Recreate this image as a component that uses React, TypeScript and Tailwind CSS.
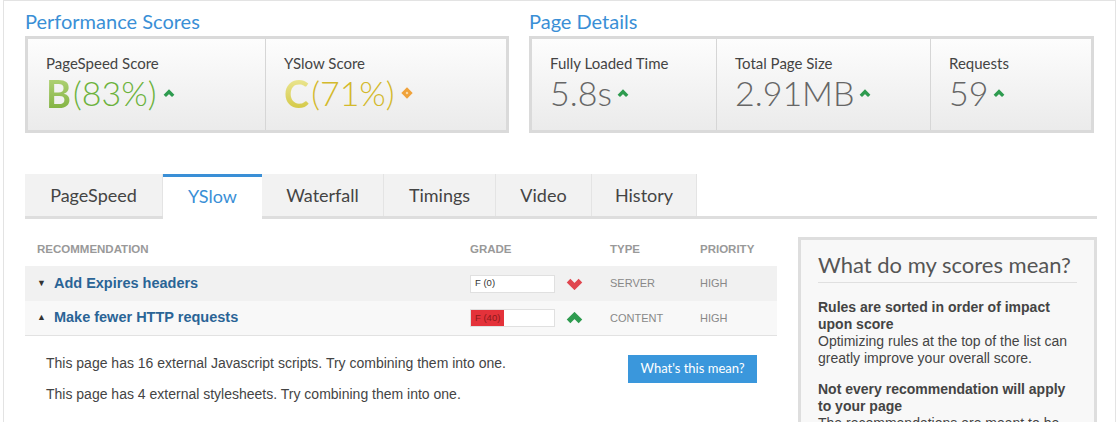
import React from "react";

const head = { fontFamily: "Lato, 'Open Sans', sans-serif" };
const body = { fontFamily: "'Liberation Sans', Arial, sans-serif" };

function Caret({ up = true, className = "", w = 2.4 }: { up?: boolean; className?: string; w?: number }) {
  return (
    <svg viewBox="0 0 10 7" className={className}>
      <polyline
        points={up ? "1.5,5.5 5,2 8.5,5.5" : "1.5,1.5 5,5 8.5,1.5"}
        fill="none"
        stroke="currentColor"
        strokeWidth={w}
      />
    </svg>
  );
}

function Stat({ label, children, className = "" }: { label: string; children: React.ReactNode; className?: string }) {
  return (
    <div className={`bg-gradient-to-b from-[#fdfdfd] to-[#ebebeb] pl-[18px] pt-[14px] ${className}`}>
      <div className="text-[15px] text-[#444] leading-5" style={head}>{label}</div>
      <div className="flex items-center h-[38px] mt-[1px]" style={head}>{children}</div>
    </div>
  );
}

export default function App() {
  const tabs = ["PageSpeed", "YSlow", "Waterfall", "Timings", "Video", "History"];
  const widths = ["w-[138px]", "w-[99px]", "w-[122px]", "w-[112px]", "w-[96px]", "w-[105px]"];

  return (
    <div className="w-[1120px] h-[422px] overflow-hidden bg-white">
      <div className="ml-[3px] w-[1113px] h-[422px] border-l border-r border-t border-[#e3e3e3] pl-[21px] pt-[7px]">
        {/* Top summaries */}
        <div className="flex gap-[20px]">
          <div className="w-[484px]">
            <h2 className="text-[20px] leading-[26px] text-[#3a8fd6] mb-[2px]" style={head}>Performance Scores</h2>
            <div className="border-[3px] border-[#dadada] flex h-[97px]">
              <Stat label="PageSpeed Score" className="w-[238px] border-r border-[#d6d6d6]">
                <span className="text-[38px] font-bold leading-none bg-gradient-to-b from-[#b6d67a] to-[#7fb03e] bg-clip-text text-transparent">B</span>
                <span className="text-[34px] font-light leading-none text-[#6cb23c] ml-[2px]">(83%)</span>
                <Caret className="w-[12px] h-[9px] text-[#2e9b4f] ml-[6px]" w={2.8} />
              </Stat>
              <Stat label="YSlow Score" className="flex-1">
                <span className="text-[38px] font-bold leading-none bg-gradient-to-b from-[#eeea9a] to-[#d2c63a] bg-clip-text text-transparent">C</span>
                <span className="text-[34px] font-light leading-none text-[#d3b92c] ml-[2px]">(71%)</span>
                <span className="ml-[8px] w-[8px] h-[8px] rotate-45 bg-[#f0a23a] flex items-center justify-center">
                  <span className="w-[2px] h-[2px] bg-[#fbe3b8]" />
                </span>
              </Stat>
            </div>
          </div>
          <div className="w-[565px]">
            <h2 className="text-[20px] leading-[26px] text-[#3a8fd6] mb-[2px]" style={head}>Page Details</h2>
            <div className="border-[3px] border-[#dadada] flex h-[97px]">
              <Stat label="Fully Loaded Time" className="w-[185px] border-r border-[#d6d6d6]">
                <span className="text-[34px] font-light leading-none text-[#666]">5.8s</span>
                <Caret className="w-[12px] h-[9px] text-[#2e9b4f] ml-[5px]" w={2.8} />
              </Stat>
              <Stat label="Total Page Size" className="w-[214px] border-r border-[#d6d6d6]">
                <span className="text-[34px] font-light leading-none text-[#666]">2.91MB</span>
                <Caret className="w-[12px] h-[9px] text-[#2e9b4f] ml-[5px]" w={2.8} />
              </Stat>
              <Stat label="Requests" className="flex-1">
                <span className="text-[34px] font-light leading-none text-[#666]">59</span>
                <Caret className="w-[12px] h-[9px] text-[#2e9b4f] ml-[5px]" w={2.8} />
              </Stat>
            </div>
          </div>
        </div>

        {/* Tabs */}
        <div className="mt-[41px] w-[1072px] flex border-b-[3px] border-[#dedede]">
          {tabs.map((t, i) => (
            <div
              key={t}
              className={`${widths[i]} h-[42px] flex items-center justify-center text-[18px] ${
                t === "YSlow"
                  ? "bg-white text-[#3a8fd6] border-t-[3px] border-[#3a8fd6] -mb-[3px] h-[45px] pb-[3px]"
                  : "bg-[#f2f2f2] text-[#444] border-r border-[#e4e4e4]"
              }`}
              style={head}
            >
              {t}
            </div>
          ))}
        </div>

        {/* Content */}
        <div className="flex mt-[18px]">
          <div className="w-[752px]" style={body}>
            <div className="flex text-[11.5px] text-[#999] font-bold h-[26px] items-center mb-[3px]">
              <div className="w-[445px] pl-[12px]">RECOMMENDATION</div>
              <div className="w-[140px]">GRADE</div>
              <div className="w-[90px]">TYPE</div>
              <div>PRIORITY</div>
            </div>
            <div className="flex items-center h-[35px] bg-[#f1f1f1]">
              <div className="w-[445px] pl-[12px] flex items-center">
                <span className="text-[9px] text-[#333] mr-[8px]">▼</span>
                <span className="text-[14.5px] font-bold text-[#2a6496]">Add Expires headers</span>
              </div>
              <div className="w-[140px] flex items-center">
                <div className="w-[85px] h-[18px] bg-white border border-[#e0e0e0] text-[9.5px] text-[#333] flex items-center pl-[4px]">F (0)</div>
                <Caret up={false} className="w-[17px] h-[12px] text-[#e0464f] ml-[11px]" w={3} />
              </div>
              <div className="w-[90px] text-[11px] text-[#888]">SERVER</div>
              <div className="text-[11px] text-[#888]">HIGH</div>
            </div>
            <div className="flex items-center h-[35px] bg-[#f8f8f8] border-b border-[#e2e2e2]">
              <div className="w-[445px] pl-[12px] flex items-center">
                <span className="text-[9px] text-[#333] mr-[8px]">▲</span>
                <span className="text-[14.5px] font-bold text-[#2a6496]">Make fewer HTTP requests</span>
              </div>
              <div className="w-[140px] flex items-center">
                <div className="w-[85px] h-[18px] bg-white border border-[#e0e0e0] flex">
                  <div className="w-[33px] bg-[#e4323a] text-[9.5px] text-[#8b1a1a] flex items-center pl-[4px] whitespace-nowrap">F (40)</div>
                </div>
                <Caret className="w-[17px] h-[12px] text-[#2e9b4f] ml-[11px]" w={3} />
              </div>
              <div className="w-[90px] text-[11px] text-[#888]">CONTENT</div>
              <div className="text-[11px] text-[#888]">HIGH</div>
            </div>
            <div className="flex pl-[21px] pt-[19px]">
              <div className="w-[582px] text-[14px] text-[#444]">
                <p className="leading-[16px]">This page has 16 external Javascript scripts. Try combining them into one.</p>
                <p className="leading-[16px] mt-[15px]">This page has 4 external stylesheets. Try combining them into one.</p>
              </div>
              <div className="w-[129px] h-[28px] bg-[#3a97dc] text-white text-[13px] flex items-center justify-center" style={head}>
                What&apos;s this mean?
              </div>
            </div>
          </div>

          <div className="ml-[21px] w-[299px] h-[200px] border-[3px] border-[#dedede] bg-[#f8f8f8] px-[17px] pt-[10px]">
            <h3 className="text-[22px] text-[#555] leading-[30px] pb-[2px] border-b border-[#e0e0e0]" style={head}>What do my scores mean?</h3>
            <div className="text-[14px] text-[#444] leading-[17px] mt-[16px]" style={body}>
              <div className="font-bold">Rules are sorted in order of impact upon score</div>
              <div>Optimizing rules at the top of the list can greatly improve your overall score.</div>
              <div className="font-bold mt-[14px]">Not every recommendation will apply to your page</div>
              <div>The recommendations are meant to be generic, best practices.</div>
            </div>
          </div>
        </div>
      </div>
    </div>
  );
}
